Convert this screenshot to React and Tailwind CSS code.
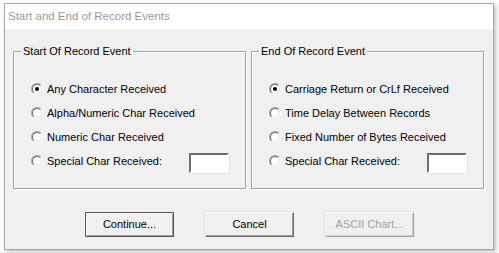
import React from 'react'

const startItems = [
  { label: 'Any Character Received', checked: true },
  { label: 'Alpha/Numeric Char Received' },
  { label: 'Numeric Char Received' },
  { label: 'Special Char Received:', input: true },
]

const endItems = [
  { label: 'Carriage Return or CrLf Received', checked: true },
  { label: 'Time Delay Between Records' },
  { label: 'Fixed Number of Bytes Received' },
  { label: 'Special Char Received:', input: true },
]

function Radio({ checked }) {
  return (
    <span className="w-[12px] h-[12px] shrink-0 rounded-full border border-t-[#a0a0a0] border-l-[#a0a0a0] border-b-[#ffffff] border-r-[#ffffff] flex">
      <span className="w-[10px] h-[10px] rounded-full border border-t-[#696969] border-l-[#696969] border-b-[#e3e3e3] border-r-[#e3e3e3] bg-white flex items-center justify-center">
        {checked && <span className="w-[4px] h-[4px] rounded-full bg-black" />}
      </span>
    </span>
  )
}

function Group({ title, items }) {
  return (
    <div className="relative w-[233px] h-[138px] border border-[#a0a0a0] shadow-[1px_1px_0_#ffffff,inset_1px_1px_0_#ffffff] pt-[25px] pl-[17px]">
      <div className="absolute -top-[8px] left-[7px] px-[2px] bg-[#f0f0f0] leading-[14px]">{title}</div>
      {items.map((it, i) => (
        <div key={i} className="h-[24px] flex items-center">
          <Radio checked={it.checked} />
          <span className="ml-[4px]">{it.label}</span>
          {it.input && (
            <span className="ml-auto mr-[16px] mt-[4px] w-[40px] h-[20px] bg-white border-2 border-t-[#6d6d6d] border-l-[#6d6d6d] border-b-[#ffffff] border-r-[#ffffff] shadow-[1px_1px_0_#e3e3e3]" />
          )}
        </div>
      ))}
    </div>
  )
}

export default function App() {
  return (
    <div className="w-[499px] h-[253px] bg-white pl-[4px] pt-[3px] text-[11px] text-black" style={{ fontFamily: '"Liberation Sans", Arial, sans-serif' }}>
      <div className="w-[490px] h-[247px] border border-[#a6a6a6] flex flex-col shadow-[2px_2px_4px_rgba(0,0,0,0.25)]">
        <div className="h-[25px] bg-white pl-[3px] flex items-center text-[11.5px] text-[#999999]">
          Start and End of Record Events
        </div>
        <div className="flex-1 bg-[#f0f0f0] flex flex-col">
          <div className="flex pt-[22px] pl-[8px] gap-[5px]">
            <Group title="Start Of Record Event" items={startItems} />
            <Group title="End Of Record Event" items={endItems} />
          </div>
          <div className="flex pl-[80px] gap-[31px] mt-[23px]">
            <button className="w-[89px] h-[25px] border border-[#555555] bg-[#f0f0f0] shadow-[inset_1px_1px_0_#ffffff,inset_-1px_-1px_0_#a0a0a0]">
              Continue...
            </button>
            <button className="w-[89px] h-[25px] border border-t-[#ffffff] border-l-[#ffffff] border-b-[#696969] border-r-[#696969] bg-[#f0f0f0] shadow-[inset_-1px_-1px_0_#a0a0a0,-1px_-1px_0_#e3e3e3]">
              Cancel
            </button>
            <button disabled className="w-[89px] h-[25px] border border-t-[#ffffff] border-l-[#ffffff] border-b-[#a0a0a0] border-r-[#a0a0a0] bg-[#f0f0f0] text-[#a0a0a0] shadow-[inset_-1px_-1px_0_#d0d0d0,-1px_-1px_0_#e3e3e3]">
              ASCII Chart...
            </button>
          </div>
        </div>
      </div>
    </div>
  )
}
